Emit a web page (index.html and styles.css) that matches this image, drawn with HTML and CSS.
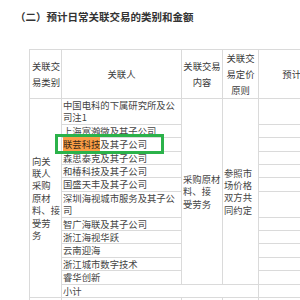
FILE: index.html
```html
<!DOCTYPE html>
<html lang="zh-CN">
<head>
<meta charset="utf-8">
<link rel="stylesheet" href="styles.css">
</head>
<body>
<div class="page">
  <h2 class="title">（二）预计日常关联交易的类别和金额</h2>
  <table class="grid">
    <colgroup>
      <col class="c1"><col class="c2"><col class="c3"><col class="c4"><col class="c5"><col class="c6">
    </colgroup>
    <thead>
      <tr>
        <th class="left">关联交<br>易类别</th>
        <th>关联人</th>
        <th>关联交易<br>内容</th>
        <th>关联交<br>易定价<br>原则</th>
        <th>预计金额</th>
        <th></th>
      </tr>
    </thead>
    <tbody>
      <tr>
        <td class="cat" rowspan="13">向关<br>联人<br>采购<br>原材<br>料、接<br>受劳<br>务</td>
        <td>中国电科的下属研究所及公<br>司注1</td>
        <td class="mid" rowspan="12">采购原材<br>料、接<br>受劳务</td>
        <td class="mid" rowspan="12">参照市<br>场价格<br>双方共<br>同约定</td>
        <td></td><td></td>
      </tr>
      <tr><td>上海富瀚微及其子公司</td><td></td><td></td></tr>
      <tr><td class="hl-cell"><span class="hl">联芸科技</span>及其子公司<span class="mark"></span></td><td></td><td></td></tr>
      <tr><td>森思泰克及其子公司</td><td></td><td></td></tr>
      <tr><td>和椿科技及其子公司</td><td></td><td></td></tr>
      <tr><td>国盛天丰及其子公司</td><td></td><td></td></tr>
      <tr><td>深圳海视城市服务及其子公<br>司</td><td></td><td></td></tr>
      <tr><td>智广海联及其子公司</td><td></td><td></td></tr>
      <tr><td>浙江海视华跃</td><td></td><td></td></tr>
      <tr><td>云南迎海</td><td></td><td></td></tr>
      <tr><td>浙江城市数字技术</td><td></td><td></td></tr>
      <tr><td>睿华创新</td><td></td><td></td></tr>
      <tr><td colspan="3">小计</td><td></td><td></td></tr>
      <tr class="next"><td></td><td></td><td></td><td></td><td></td><td></td></tr>
    </tbody>
  </table>
</div>
</body>
</html>
```
FILE: styles.css
```css
html, body {
  margin: 0;
  padding: 0;
  background: #ffffff;
  overflow: hidden;
}

body {
  font-family: "Noto Sans CJK SC", "Noto Sans", sans-serif;
  color: #444;
}

.page {
  padding: 10px 0 0 15px;
  width: 420px;
}

.title {
  margin: 0;
  font-size: 10.5px;
  line-height: 14px;
  font-weight: bold;
  color: #333;
}

.grid {
  margin: 25px 0 0 14px;
  border-collapse: collapse;
  table-layout: fixed;
  width: 374px;
  font-size: 9.33px;
}

.c1 { width: 32px; }
.c2 { width: 120px; }
.c3 { width: 41px; }
.c4 { width: 36px; }
.c5 { width: 85px; }
.c6 { width: 60px; }

.grid th,
.grid td {
  border: 1px solid #dadada;
  padding: 0 1px;
  vertical-align: middle;
  white-space: nowrap;
  overflow: hidden;
}

.grid th {
  font-weight: normal;
  line-height: 16px;
  text-align: center;
  color: #3a3a3a;
}

.grid th.left {
  text-align: left;
  padding-left: 2px;
}

.grid td {
  line-height: 12.4px;
  text-align: left;
}

.grid td.cat {
  padding-left: 2px;
}

.next td {
  height: 20px;
}

.hl-cell {
  position: relative;
  overflow: visible !important;
}

.hl {
  background: #fb9d45;
  color: #3a2a1a;
}

.mark {
  position: absolute;
  left: -7px;
  top: -4px;
  width: 109px;
  height: 20px;
  border: 3px solid #2bb24a;
  box-sizing: border-box;
}
```
